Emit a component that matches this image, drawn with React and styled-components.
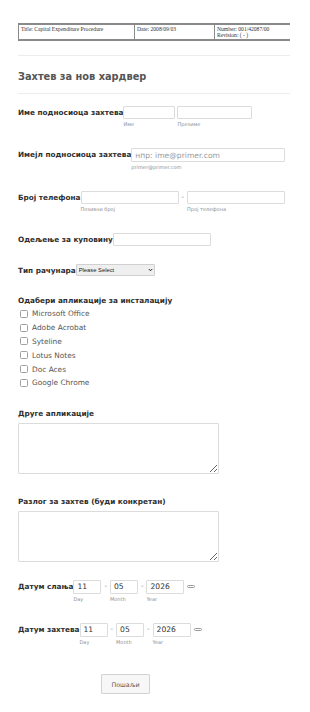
import React from "react";
import styled, { createGlobalStyle } from "styled-components";

const GlobalStyle = createGlobalStyle`
  body {
    margin: 0;
    background: #fff;
  }
`;

const Page = styled.div`
  width: 272px;
  padding: 23px 20px 10px 18px;
  font-family: "DejaVu Sans", Verdana, sans-serif;
  color: #2b2b2b;
`;

const DocTable = styled.table`
  width: 272px;
  border-collapse: collapse;
  border-top: 2px solid #8a8a8a;
  border-bottom: 2px solid #8a8a8a;
  font-family: "Liberation Serif", "Times New Roman", serif;
  font-size: 5.6px;
  color: #333;

  td {
    vertical-align: top;
    padding: 1px 2px 1px 2px;
    line-height: 6px;
    border-left: 1px solid #8a8a8a;
  }
`;

const Divider = styled.div`
  height: 1px;
  background: #ececec;
  margin: ${(p) => p.$m || "0"};
`;

const Title = styled.h2`
  margin: 14px 0 10px 0;
  font-size: 9.8px;
  line-height: 13px;
  font-weight: bold;
  color: #555;
`;

const Form = styled.div`
  padding-top: 12px;
`;

const Field = styled.div`
  display: flex;
  align-items: flex-start;
  margin-bottom: ${(p) => p.$mb || "18px"};
`;

const Label = styled.div`
  font-size: 7.3px;
  font-weight: bold;
  line-height: 13px;
  white-space: nowrap;
  color: #2e2e2e;
`;

const BlockLabel = styled(Label)`
  margin-bottom: ${(p) => p.$mb || "3px"};
`;

const Sub = styled.div`
  display: flex;
  flex-direction: column;
  margin-left: ${(p) => p.$ml || 0}px;
`;

const SubText = styled.span`
  font-size: 5px;
  line-height: 11px;
  color: #8a8f98;
  white-space: nowrap;
`;

const TextInput = styled.input`
  box-sizing: border-box;
  width: ${(p) => p.$w}px;
  height: ${(p) => p.$h || 13}px;
  border: 1px solid #dcdcdc;
  border-radius: 1px;
  padding: 0 3px;
  font-family: "DejaVu Sans", Verdana, sans-serif;
  font-size: 7.6px;
  color: #333;
  background: #fff;
  outline: none;

  &::placeholder {
    color: #9a9a9a;
  }
`;

const Dash = styled.span`
  font-size: 7px;
  line-height: 13px;
  color: #888;
  padding: 0 3px;
`;

const SelectWrap = styled.div`
  position: relative;
  width: 79px;
  height: 12px;
`;

const Select = styled.select`
  display: block;
  appearance: none;
  box-sizing: border-box;
  width: 79px;
  height: 12px;
  margin: 0;
  border: 1px solid #d0d0d0;
  border-radius: 1px;
  background: #efefef;
  font-family: "Liberation Sans", Arial, sans-serif;
  font-size: 5.8px;
  padding: 0 2px;
  color: #222;
  outline: none;
`;

const Chevron = styled.svg`
  position: absolute;
  right: 2px;
  top: 4px;
  width: 5px;
  height: 4px;
  pointer-events: none;
`;

const CheckList = styled.div`
  display: flex;
  flex-direction: column;
  margin-bottom: 17px;
`;

const CheckRow = styled.label`
  display: flex;
  align-items: center;
  height: 13.8px;
  padding-left: 2px;
`;

const Box = styled.span`
  box-sizing: border-box;
  width: 8px;
  height: 8px;
  border: 1px solid #a0a0a0;
  border-radius: 1.5px;
  margin-right: 4px;
  background: #fff;
`;

const CheckText = styled.span`
  font-size: 7.4px;
  color: #555;
`;

const TextArea = styled.textarea`
  display: block;
  box-sizing: border-box;
  width: 201px;
  height: 51px;
  border: 1px solid #dcdcdc;
  border-radius: 1px;
  resize: vertical;
  margin: 0 0 ${(p) => p.$mb || 21}px 0;
  outline: none;
`;

const DateInput = styled(TextInput)`
  height: 14px;
`;

const CalIcon = styled.span`
  box-sizing: border-box;
  width: 8px;
  height: 3.5px;
  border: 1px solid #999;
  border-radius: 2px;
  margin: 5px 0 0 3px;
`;

const SubmitWrap = styled.div`
  padding-left: 83px;
  margin-top: 24px;
`;

const Submit = styled.button`
  box-sizing: border-box;
  width: 49px;
  height: 20px;
  border: 1px solid #d2d2d2;
  border-radius: 1px;
  background: #f7f7f7;
  font-family: "DejaVu Sans", Verdana, sans-serif;
  font-size: 6.3px;
  color: #555;
`;

const apps = [
  "Microsoft Office",
  "Adobe Acrobat",
  "Syteline",
  "Lotus Notes",
  "Doc Aces",
  "Google Chrome",
];

function DateField({ label, mb }) {
  return (
    <Field $mb={mb}>
      <Label>{label}</Label>
      <Sub>
        <DateInput $w={28} defaultValue="11" />
        <SubText>Day</SubText>
      </Sub>
      <Dash>-</Dash>
      <Sub>
        <DateInput $w={28} defaultValue="05" />
        <SubText>Month</SubText>
      </Sub>
      <Dash>-</Dash>
      <Sub>
        <DateInput $w={38} defaultValue="2026" />
        <SubText>Year</SubText>
      </Sub>
      <CalIcon />
    </Field>
  );
}

export default function App() {
  return (
    <>
      <GlobalStyle />
      <Page>
        <DocTable>
          <tbody>
            <tr>
              <td style={{ width: 111 }}>Title: Capital Expenditure Procedure</td>
              <td style={{ width: 75 }}>Date: 2008/09/03</td>
              <td>
                Number: 001/42087/00
                <br />
                Revision: ( - )
              </td>
            </tr>
          </tbody>
        </DocTable>

        <Divider $m="14px 0 0 0" />
        <Title>Захтев за нов хардвер</Title>
        <Divider />

        <Form>
          <Field>
            <Label>Име подносиоца захтева</Label>
            <Sub>
              <TextInput $w={52} />
              <SubText>Име</SubText>
            </Sub>
            <Sub $ml={2}>
              <TextInput $w={75} />
              <SubText>Презиме</SubText>
            </Sub>
          </Field>

          <Field>
            <Label>Имејл подносиоца захтева</Label>
            <Sub>
              <TextInput $w={154} $h={14} placeholder="нпр: ime@primer.com" />
              <SubText>primer@primer.com</SubText>
            </Sub>
          </Field>

          <Field>
            <Label>Број телефона</Label>
            <Sub>
              <TextInput $w={98} />
              <SubText>Позивни број</SubText>
            </Sub>
            <Dash>-</Dash>
            <Sub>
              <TextInput $w={98} />
              <SubText>Проj телефона</SubText>
            </Sub>
          </Field>

          <Field>
            <Label>Одељење за куповину</Label>
            <TextInput $w={98} />
          </Field>

          <Field $mb="17px">
            <Label>Тип рачунара</Label>
            <SelectWrap>
              <Select defaultValue="">
                <option value="">Please Select</option>
                <option>Desktop</option>
                <option>Laptop</option>
              </Select>
              <Chevron viewBox="0 0 10 8">
                <path d="M1.5 2 L5 5.5 L8.5 2" fill="none" stroke="#222" strokeWidth="2" />
              </Chevron>
            </SelectWrap>
          </Field>

          <BlockLabel $mb="0px">Одабери апликације за инсталацију</BlockLabel>
          <CheckList>
            {apps.map((a) => (
              <CheckRow key={a}>
                <Box />
                <CheckText>{a}</CheckText>
              </CheckRow>
            ))}
          </CheckList>

          <BlockLabel>Друге апликације</BlockLabel>
          <TextArea $mb={21} />

          <BlockLabel>Разлог за захтев (буди конкретан)</BlockLabel>
          <TextArea $mb={18} />

          <DateField label="Датум слања" />
          <DateField label="Датум захтева" mb="0px" />

          <SubmitWrap>
            <Submit>Пошаљи</Submit>
          </SubmitWrap>
        </Form>
      </Page>
    </>
  );
}
